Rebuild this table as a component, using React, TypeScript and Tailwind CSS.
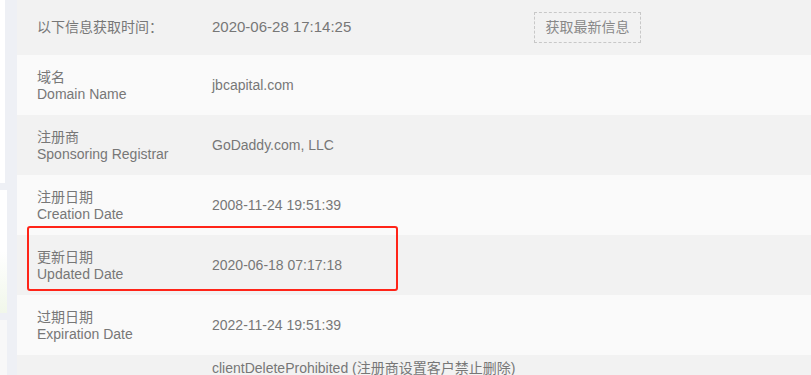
import React from "react";

const rows = [
  { zh: "域名", en: "Domain Name", value: "jbcapital.com", bg: "bg-[#fafafa]" },
  { zh: "注册商", en: "Sponsoring Registrar", value: "GoDaddy.com, LLC", bg: "bg-[#f2f2f2]" },
  { zh: "注册日期", en: "Creation Date", value: "2008-11-24 19:51:39", bg: "bg-[#fafafa]" },
  { zh: "更新日期", en: "Updated Date", value: "2020-06-18 07:17:18", bg: "bg-[#f2f2f2]", mark: true },
  { zh: "过期日期", en: "Expiration Date", value: "2022-11-24 19:51:39", bg: "bg-[#fafafa]" },
];

export default function App() {
  return (
    <div
      className="flex w-[811px] h-[375px] overflow-hidden bg-[#eef0f5]"
      style={{ fontFamily: '"Liberation Sans", "Noto Sans CJK SC", sans-serif' }}
    >
      <div className="w-[17px] shrink-0 flex flex-col">
        <div className="w-[5px] h-[183px] shrink-0 bg-white" />
        <div className="w-[7px] h-[123px] shrink-0 mt-[7px] bg-gradient-to-b from-white via-white to-[#f1f7ea]" />
        <div className="w-[7px] h-[55px] shrink-0 mt-[7px] bg-[#f8f8f8]" />
      </div>
      <div className="flex-1 flex flex-col relative">
        <div className="h-[55px] shrink-0 bg-[#f2f2f2] flex items-center">
          <div className="w-[195px] pl-[20px] text-[14px] text-[#777] shrink-0">以下信息获取时间：</div>
          <div className="w-[322px] text-[15px] text-[#777] shrink-0">2020-06-28 17:14:25</div>
          <div className="w-[107px] h-[31px] border border-dashed border-[#c8c8c8] flex items-center justify-center text-[14px] text-[#888] mt-[-1px]">
            获取最新信息
          </div>
        </div>
        {rows.map((r) => (
          <div key={r.zh} className={`h-[60px] shrink-0 ${r.bg} flex items-center relative`}>
            <div className="w-[195px] pl-[20px] shrink-0 text-[14px] text-[#777] leading-[17px] pt-[2px]">
              <div>{r.zh}</div>
              <div>{r.en}</div>
            </div>
            <div className="text-[14px] text-[#777]">{r.value}</div>
            {r.mark && (
              <div className="absolute left-[10px] top-[-9px] w-[371px] h-[65px] border-2 border-[#ff2418] rounded-[3px]" />
            )}
          </div>
        ))}
        <div className="h-[60px] shrink-0 bg-[#f2f2f2] flex">
          <div className="w-[195px] shrink-0" />
          <div className="text-[14px] text-[#777] pt-[5px] leading-[17px]">clientDeleteProhibited (注册商设置客户禁止删除)</div>
        </div>
      </div>
    </div>
  );
}
